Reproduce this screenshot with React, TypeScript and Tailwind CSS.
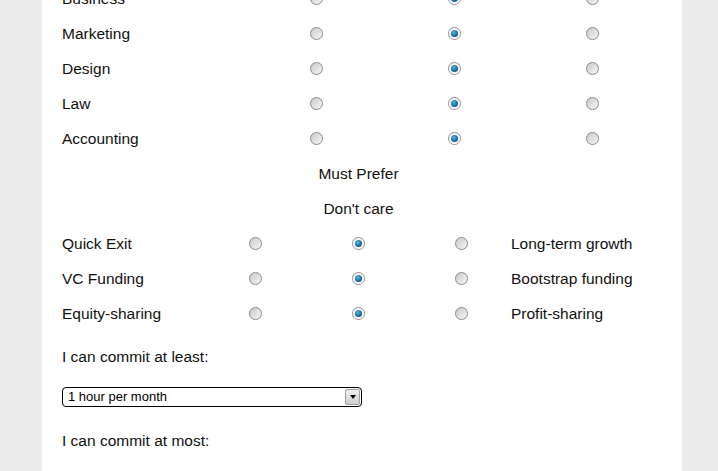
import React from "react";

function Radio({ checked }: { checked?: boolean }) {
  return (
    <div className="relative h-[13px] w-[13px] rounded-full border border-[#8e8e8e] bg-[linear-gradient(135deg,#c9c9c9,#f7f7f7)] shadow-[0_0_1px_#ddd]">
      {checked && (
        <div className="absolute inset-0 flex items-center justify-center rounded-full bg-[#f4f4f4]">
          <div className="h-[7px] w-[7px] rounded-full bg-[radial-gradient(circle_at_40%_35%,#5cb3e0,#1468a0_60%,#0b4a75)]" />
        </div>
      )}
    </div>
  );
}

const skills = ["Business", "Marketing", "Design", "Law", "Accounting"];
const prefs: [string, string][] = [
  ["Quick Exit", "Long-term growth"],
  ["VC Funding", "Bootstrap funding"],
  ["Equity-sharing", "Profit-sharing"],
];

export default function App() {
  return (
    <div
      className="h-[471px] overflow-hidden bg-[#ececec] text-[15.5px] text-[#111]"
      style={{ fontFamily: '"Liberation Sans", Arial, sans-serif' }}
    >
      <div className="ml-[42px] mt-[-19px] min-h-[520px] w-[640px] bg-white px-5 pb-10">
        <div className="grid grid-cols-[185px_138px_138px_138px]">
          {skills.map((s) => (
            <React.Fragment key={s}>
              <div className="flex h-[35px] items-center">{s}</div>
              <div className="flex h-[35px] items-center justify-center">
                <Radio />
              </div>
              <div className="flex h-[35px] items-center justify-center">
                <Radio checked />
              </div>
              <div className="flex h-[35px] items-center justify-center">
                <Radio />
              </div>
            </React.Fragment>
          ))}
        </div>
        <div className="grid grid-cols-[142px_103px_103px_103px_1fr]">
          <div className="col-start-3 flex h-[35px] items-center justify-center whitespace-nowrap">
            Must Prefer
          </div>
          <div className="col-span-2" />
          <div className="col-start-3 flex h-[35px] items-center justify-center whitespace-nowrap">
            Don't care
          </div>
          <div className="col-span-2" />
          {prefs.map(([l, r]) => (
            <React.Fragment key={l}>
              <div className="flex h-[35px] items-center">{l}</div>
              <div className="flex h-[35px] items-center justify-center">
                <Radio />
              </div>
              <div className="flex h-[35px] items-center justify-center">
                <Radio checked />
              </div>
              <div className="flex h-[35px] items-center justify-center">
                <Radio />
              </div>
              <div className="-ml-[2px] flex h-[35px] items-center whitespace-nowrap">{r}</div>
            </React.Fragment>
          ))}
        </div>
        <div className="mt-[17px] leading-[18px]">I can commit at least:</div>
        <div className="mt-[21px] flex h-[20px] w-[300px] items-center rounded-[4px] border border-black bg-white pl-[5px] pr-[1px] text-[13px] text-black">
          <span className="flex-1">1 hour per month</span>
          <div className="flex h-[16px] w-[15px] items-center justify-center rounded-[2px] border border-[#a0a0a0] bg-[linear-gradient(#f0f0f0,#cfcfcf)]">
            <div className="h-0 w-0 border-x-[3.5px] border-t-[4px] border-x-transparent border-t-black" />
          </div>
        </div>
        <div className="mt-[25px] leading-[18px]">I can commit at most:</div>
      </div>
    </div>
  );
}
